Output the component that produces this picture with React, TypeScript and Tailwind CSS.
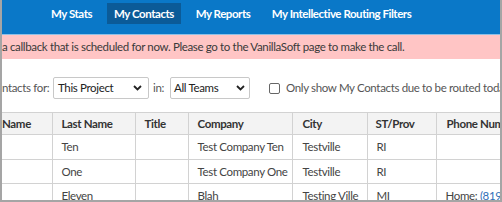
import React from 'react';

const navItems = [
  { label: 'My Stats', w: 'w-[57px]' },
  { label: 'My Contacts', w: 'w-[74px]', active: true },
  { label: 'My Reports', w: 'w-[70px]' },
  { label: 'My Intellective Routing Filters', w: 'w-[153px]' },
];

interface Row {
  first: string;
  last: string;
  title: string;
  company: string;
  city: string;
  st: string;
  phone?: string;
}

const rows: Row[] = [
  { first: '', last: 'Ten', title: '', company: 'Test Company Ten', city: 'Testville', st: 'RI' },
  { first: '', last: 'One', title: '', company: 'Test Company One', city: 'Testville', st: 'RI' },
  { first: '', last: 'Eleven', title: '', company: 'Blah', city: 'Testing Ville', st: 'MI', phone: '(819)' },
];

function Chevron() {
  return (
    <svg width="9" height="6" viewBox="0 0 9 6" className="shrink-0">
      <path d="M1 1l3.5 3.5L8 1" fill="none" stroke="#222" strokeWidth="1.8" />
    </svg>
  );
}

export default function App() {
  return (
    <div
      className="w-[502px] h-[202px] overflow-hidden bg-white border-l-2 border-r-2 border-b-2 border-[#a5a5a5] text-[11.5px] tracking-[-0.35px] text-[#333]"
      style={{ fontFamily: 'Lato, "Noto Sans", sans-serif' }}
    >
      {/* top nav */}
      <div className="h-[34px] bg-[#0a78c8] flex items-start pt-[3px]">
        <div className="flex gap-[7px] ml-[41px]">
          {navItems.map((n) => (
            <div
              key={n.label}
              className={`${n.w} h-[21px] flex items-center justify-center font-bold tracking-[-0.45px] text-white whitespace-nowrap ${
                n.active ? 'bg-[#0b5b98]' : ''
              }`}
            >
              {n.label}
            </div>
          ))}
        </div>
      </div>

      {/* callback banner */}
      <div className="h-[25px] bg-[#ffc5c5] flex items-center whitespace-nowrap text-[#3a3a3a] border-t border-[#8fc0e6]">
        a callback that is scheduled for now. Please go to the VanillaSoft page to make the call.
      </div>

      {/* filters */}
      <div className="mt-[18px] h-[22px] flex items-center whitespace-nowrap text-[#555]">
        <div className="w-[45px] shrink-0 text-right">ntacts for:</div>
        <div className="ml-[6px] w-[96px] shrink-0 h-[22px] border border-[#c8c8c8] rounded-[2px] flex items-center justify-between pl-[4px] pr-[6px] text-[#222]">
          <span>This Project</span>
          <Chevron />
        </div>
        <div className="ml-[4px] shrink-0">in:</div>
        <div className="ml-[6px] w-[80px] shrink-0 h-[22px] border border-[#c8c8c8] rounded-[2px] flex items-center justify-between pl-[3px] pr-[4px] text-[#222]">
          <span>All Teams</span>
          <Chevron />
        </div>
        <div className="ml-[19px] w-[11px] h-[11px] shrink-0 border border-[#666] rounded-[2px]" />
        <div className="ml-[6px] shrink-0">Only show My Contacts due to be routed today</div>
      </div>

      {/* table */}
      <table className="mt-[13px] table-fixed border-collapse w-[520px]">
        <colgroup>
          <col className="w-[50px]" />
          <col className="w-[83px]" />
          <col className="w-[53px]" />
          <col className="w-[104px]" />
          <col className="w-[75px]" />
          <col className="w-[69px]" />
          <col className="w-[86px]" />
        </colgroup>
        <thead>
          <tr className="h-[22px] bg-[#f3f3f3] text-[#333] text-left">
            <th className="pl-0 border-t border-b border-[#d2d2d2] font-bold">Name</th>
            <th className="pl-[9px] border border-[#d2d2d2] font-bold">Last Name</th>
            <th className="pl-[9px] border border-[#d2d2d2] font-bold">Title</th>
            <th className="pl-[9px] border border-[#d2d2d2] font-bold">Company</th>
            <th className="pl-[10px] border border-[#d2d2d2] font-bold">City</th>
            <th className="pl-[8px] border border-[#d2d2d2] font-bold">ST/Prov</th>
            <th className="pl-[10px] border border-[#d2d2d2] font-bold whitespace-nowrap overflow-hidden">
              Phone Number
            </th>
          </tr>
        </thead>
        <tbody>
          {rows.map((r, i) => (
            <tr key={i} className="h-[24.5px] text-[#444]">
              <td className="border-b border-[#d2d2d2]">{r.first}</td>
              <td className="pl-[9px] border border-[#d2d2d2]">{r.last}</td>
              <td className="pl-[9px] border border-[#d2d2d2]">{r.title}</td>
              <td className="pl-[9px] border border-[#d2d2d2] whitespace-nowrap">{r.company}</td>
              <td className="pl-[10px] border border-[#d2d2d2] whitespace-nowrap">{r.city}</td>
              <td className="pl-[9px] border border-[#d2d2d2]">{r.st}</td>
              <td className="pl-[9px] border border-[#d2d2d2] whitespace-nowrap overflow-hidden">
                {r.phone && (
                  <>
                    Home: <span className="text-[#2f6fb8]">{r.phone}</span>
                  </>
                )}
              </td>
            </tr>
          ))}
        </tbody>
      </table>
    </div>
  );
}
